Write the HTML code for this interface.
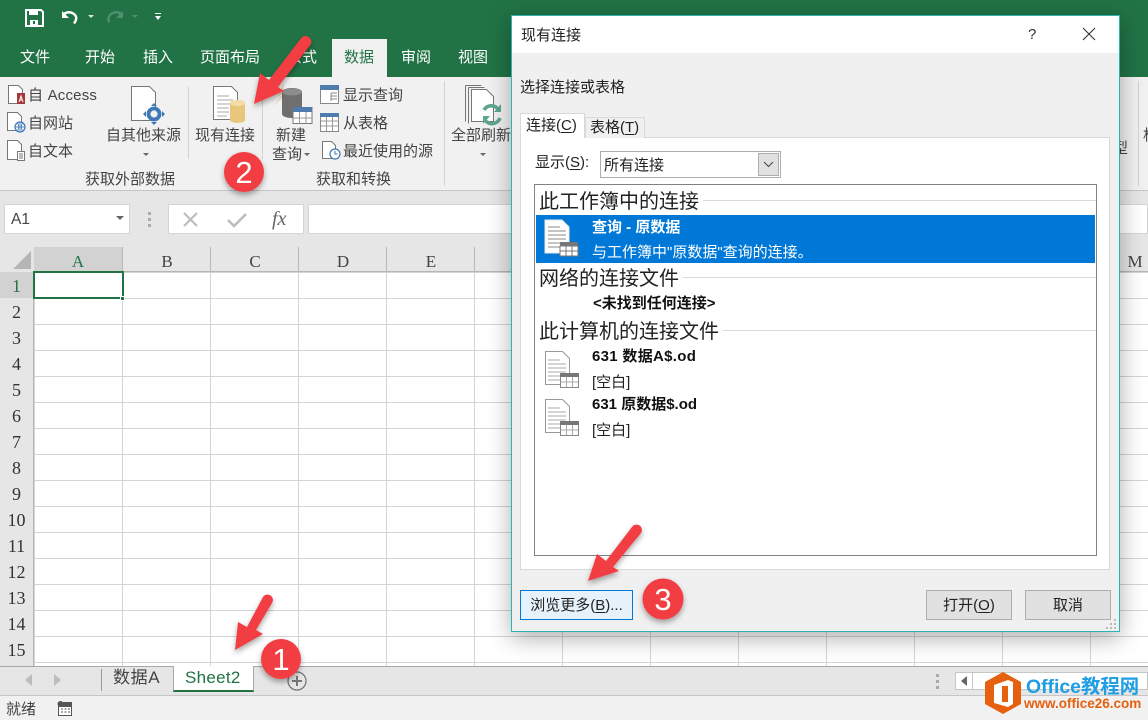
<!DOCTYPE html>
<html lang="zh"><head><meta charset="utf-8"><style>
html,body{margin:0;padding:0}
body{width:1148px;height:720px;overflow:hidden;position:relative;background:#fff;font-family:"Liberation Sans","Noto Sans CJK SC",sans-serif;color:#333}
.a{position:absolute}
.t{position:absolute;white-space:nowrap;line-height:20px;transform:translateY(-10px);font-size:15px}
.tab{color:#fff;font-size:15px;transform:translateY(-8px)}
.r{color:#444;font-size:15px;transform:translateY(-8px)}
.c{font-family:"Liberation Serif",serif;font-size:17px;color:#444;position:absolute;top:250px;width:88px;text-align:center;line-height:24px}
.n{font-family:"Liberation Serif",serif;font-size:18px;color:#333;position:absolute;left:0;width:33px;text-align:center;line-height:28px}
.h{position:absolute;left:539px;font-size:20px;color:#222;white-space:nowrap;line-height:24px;transform:translateY(-11px)}
.l{position:absolute;height:1px;background:#d9d9d9;right:52px}
.b{font-weight:bold;color:#111;font-size:15px}
.btn{position:absolute;top:590px;height:28px;background:#e1e1e1;border:1px solid #adadad;text-align:center;line-height:30px;font-size:15px;color:#222}
u{text-underline-offset:2px}
</style></head><body>

<!-- title bar -->
<div class="a" style="left:0;top:0;width:1148px;height:77px;background:#217346"></div>
<svg class="a" style="left:0;top:0" width="180" height="36" viewBox="0 0 180 36">
<path d="M26 10h15l2 2v14H26z" fill="none" stroke="#fff" stroke-width="2"/><path d="M29 10h9v5h-9z" fill="#fff"/><path d="M30 20h8v6h-8z" fill="#fff"/><path d="M33 21h2v3h-2z" fill="#217346"/>
<path d="M64 14a8 8 0 0 1 12 2.500q1 3-2 7" fill="none" stroke="#fff" stroke-width="2.400"/><path d="M62 11v7h7z" fill="#fff"/>
<path d="M88 15h6l-3 3z" fill="#d8e6dd"/>
<path d="M121 14a8 8 0 0 0-12 2.500q-1 2 0 6" fill="none" stroke="#4f9070" stroke-width="2.400"/><path d="M123 11v7h-7z" fill="#4f9070"/>
<path d="M132 15h6l-3 3z" fill="#4f9070"/>
<path d="M155 13h6v1h-6zM155 16h6l-3 4z" fill="#fff"/>
</svg>
<div class="t" style="left:723px;top:20px;color:#a8c9b6;font-size:14px">631.xlsx - Excel</div>
<div class="a" style="left:332px;top:39px;width:55px;height:38px;background:#f1f1f1"></div>
<div class="t tab" style="left:20px;top:56px">文件</div>
<div class="t tab" style="left:85px;top:56px">开始</div>
<div class="t tab" style="left:143px;top:56px">插入</div>
<div class="t tab" style="left:200px;top:56px">页面布局</div>
<div class="t tab" style="left:287px;top:56px">公式</div>
<div class="t tab" style="left:344px;top:56px;color:#217346">数据</div>
<div class="t tab" style="left:401px;top:56px">审阅</div>
<div class="t tab" style="left:458px;top:56px">视图</div>

<!-- ribbon -->
<div class="a" style="left:0;top:77px;width:1148px;height:113px;background:#f1f1f1"></div>
<div class="a" style="left:0;top:190px;width:1148px;height:1px;background:#c6c6c6"></div>
<div class="a" style="left:188px;top:87px;width:1px;height:72px;background:#d2d2d2"></div>
<div class="a" style="left:262px;top:87px;width:1px;height:72px;background:#d2d2d2"></div>
<div class="a" style="left:444px;top:81px;width:1px;height:105px;background:#d2d2d2"></div>
<div class="a" style="left:1138px;top:81px;width:1px;height:105px;background:#d2d2d2"></div>

<svg class="a" style="left:0;top:77px" width="520" height="100" viewBox="0 0 520 100">
<g fill="#fff" stroke="#777" stroke-width="1">
<path d="M8.500 8.500h10l4 4v14h-14z"/><path d="M7.500 35.500h10l4 4v14h-14z"/><path d="M7.500 63.500h10l4 4v15h-14z"/>
<path d="M131.500 9.500h18l6 6v28h-24z"/>
<path d="M213.500 9.500h18l6 6v27h-24z"/>
</g>
<path d="M17 16h8v11h-8z" fill="#a4373a"/><path d="M19 25l2-6 2 6M19.700 23h2.600" stroke="#fff" fill="none" stroke-width="1"/>
<circle cx="20" cy="50" r="5" fill="#eef3fa" stroke="#3f78b5" stroke-width="1.200"/><path d="M15 50h10M20 45v10M17.500 46q2.500 4 0 8M22.500 46q-2.500 4 0 8" stroke="#3f78b5" fill="none" stroke-width=".8"/>
<path d="M17.500 74.500h7v9h-7zM19 77h4M19 79h4M19 81h4" fill="#fff" stroke="#777"/>
<circle cx="154" cy="37" r="5.500" fill="#f1f1f1" stroke="#3f78b5" stroke-width="3.800"/><path d="M154 26l3 3h-6zM154 48l3-3h-6zM143 37l3-3v6zM165 37l-3-3v6z" fill="#3f78b5"/>
<path d="M217 19h12M217 23h16M217 27h16M217 31h12M217 35h12M217 39h10" stroke="#aaa"/>
<path d="M230 26a7.500 3 0 0 1 15 0v17a7.500 3 0 0 1-15 0z" fill="#e8c77d"/><ellipse cx="237.500" cy="26" rx="7.500" ry="3" fill="#f2dda9"/>
<path d="M284 6l-6 13 5-2-10 13 15-16-5 1z" fill="#e6cf9e"/>
<path d="M282 15a10 4 0 0 1 20 0v22a10 4 0 0 1-20 0z" fill="#6f6f6f"/><ellipse cx="292" cy="15" rx="10" ry="3.500" fill="#8d8d8d"/>
<path d="M293 30.500h19v16h-19z" fill="#fff" stroke="#777"/><path d="M293 30h19v5h-19z" fill="#4f7cac"/><path d="M293 41h19M299.500 35v12M306 35v12" stroke="#999"/>
<path d="M320.500 8.500h18v18h-18z" fill="#fff" stroke="#888"/><path d="M320 8h19v5h-19z" fill="#4f7cac"/><path d="M331 16h6M331 19h6M331 22h6M331 16v8" stroke="#888"/>
<path d="M320.500 36.500h18v18h-18z" fill="#fff" stroke="#888"/><path d="M320 36h19v4h-19z" fill="#4f7cac"/><path d="M321 44h17M321 49h17M326.500 40v14M332.500 40v14" stroke="#999"/>
<g fill="none" stroke="#777"><path d="M465.500 8.500h16M465.500 8.500v36M468.500 10.500h16M468.500 10.500v36"/></g>
<path d="M471.500 12.500h15l7 7v25h-22z" fill="#fff" stroke="#777"/>
<path d="M484 33a8.500 8.500 0 0 1 14-1M500 41a8.500 8.500 0 0 1-15 2" stroke="#5fa58e" stroke-width="3.600" fill="none"/><path d="M501 27v8h-7zM483 47v-8h7z" fill="#5fa58e"/>
<path d="M143 76h6l-3 3zM304 76h6l-3 3zM480 76h6l-3 3z" fill="#666"/>
</svg>
<svg class="a" style="left:320px;top:139px" width="22" height="22" viewBox="0 0 22 22"><path d="M2.500 2.500h9l4 4v13h-13z" fill="#fff" stroke="#777"/><circle cx="15" cy="15" r="5" fill="#fff" stroke="#3f78b5" stroke-width="1.200"/><path d="M15 12v3h2.500" fill="none" stroke="#3f78b5"/></svg>

<div class="t r" style="left:28px;top:94px;letter-spacing:.2px">自 Access</div>
<div class="t r" style="left:28px;top:122px">自网站</div>
<div class="t r" style="left:28px;top:150px">自文本</div>
<div class="t r" style="left:106px;top:134px">自其他来源</div>
<div class="t r" style="left:195px;top:134px">现有连接</div>
<div class="t r" style="left:276px;top:134px">新建</div>
<div class="t r" style="left:272px;top:153px">查询</div>
<div class="t r" style="left:343px;top:94px">显示查询</div>
<div class="t r" style="left:343px;top:122px">从表格</div>
<div class="t r" style="left:343px;top:150px">最近使用的源</div>
<div class="t r" style="left:451px;top:134px">全部刷新</div>
<div class="t r" style="left:85px;top:178px">获取外部数据</div>
<div class="t r" style="left:316px;top:178px">获取和转换</div>
<div class="t r" style="left:1113px;top:147px">型</div>
<div class="t r" style="left:1143px;top:134px">格</div>

<!-- formula bar -->
<div class="a" style="left:0;top:191px;width:1148px;height:56px;background:#e6e6e6"></div>
<div class="a" style="left:4px;top:204px;width:126px;height:30px;background:#fff;border:1px solid #d4d4d4;box-sizing:border-box"></div>
<div class="t" style="left:11px;top:220px;color:#444;font-size:15.500px">A1</div>
<svg class="a" style="left:115px;top:215px" width="10" height="8"><path d="M1 1h8l-4 4z" fill="#666"/></svg>
<div class="a" style="left:148px;top:212px;width:3px;height:3px;background:#aaa;box-shadow:0 6px #aaa,0 12px #aaa"></div>
<div class="a" style="left:168px;top:204px;width:136px;height:30px;background:#fff;border:1px solid #d4d4d4;box-sizing:border-box"></div>
<div class="a" style="left:308px;top:204px;width:840px;height:30px;background:#fff;border:1px solid #d4d4d4;box-sizing:border-box"></div>
<svg class="a" style="left:180px;top:208px" width="110" height="24" viewBox="0 0 110 24"><path d="M4 5l13 13M17 5L4 18" stroke="#bdbdbd" stroke-width="2.200"/><path d="M48 12l6 6 12-12" fill="none" stroke="#bdbdbd" stroke-width="2.600"/></svg>
<div class="t" style="left:272px;top:219px;font-family:'Liberation Serif',serif;font-style:italic;color:#666;font-size:20px">fx</div>

<!-- sheet -->
<div class="a" style="left:0;top:247px;width:1148px;height:25px;background:#e6e6e6;border-bottom:0"></div>
<div class="a" style="left:0;top:272px;width:34px;height:394px;background:#e6e6e6"></div>
<div class="a" style="left:34px;top:271px;width:1114px;height:1px;background:#b5b5b5"></div>
<div class="a" style="left:33px;top:272px;width:1px;height:394px;background:#b5b5b5"></div>
<div class="a" style="left:34px;top:272px;width:1114px;height:394px;background-color:#fff;background-image:linear-gradient(to right,transparent 87px,#d4d4d4 87px),linear-gradient(to bottom,transparent 25px,#d4d4d4 25px);background-size:88px 26px;background-position:1px 1px"></div>
<div class="a" style="left:34px;top:247px;width:88px;height:25px;background:#d2d2d2"></div>
<div class="a" style="left:0;top:272px;width:33px;height:26px;background:#d2d2d2"></div>
<svg class="a" style="left:12px;top:250px" width="20" height="20"><path d="M19 1v18H1z" fill="#b5b5b5"/></svg>
<svg class="a" style="left:0;top:247px" width="1148" height="25"><path d="M122.500 0v25M210.500 0v25M298.500 0v25M386.500 0v25M474.500 0v25M1090.500 0v25" stroke="#b8b8b8"/></svg>
<div class="c" style="left:34px;color:#217346">A</div><div class="c" style="left:123px">B</div><div class="c" style="left:211px">C</div><div class="c" style="left:299px">D</div><div class="c" style="left:387px">E</div><div class="c" style="left:1091px">M</div>
<div class="n" style="top:272px;color:#217346">1</div><div class="n" style="top:298px">2</div><div class="n" style="top:324px">3</div><div class="n" style="top:350px">4</div><div class="n" style="top:376px">5</div><div class="n" style="top:402px">6</div><div class="n" style="top:428px">7</div><div class="n" style="top:454px">8</div><div class="n" style="top:480px">9</div><div class="n" style="top:506px">10</div><div class="n" style="top:532px">11</div><div class="n" style="top:558px">12</div><div class="n" style="top:584px">13</div><div class="n" style="top:610px">14</div><div class="n" style="top:636px">15</div>
<div class="a" style="left:33px;top:271px;width:91px;height:28px;border:2px solid #217346;box-sizing:border-box"></div>
<div class="a" style="left:120px;top:296px;width:5px;height:5px;background:#217346;border:1px solid #fff;box-sizing:border-box"></div>

<!-- sheet tabs -->
<div class="a" style="left:0;top:666px;width:1148px;height:30px;background:#e6e6e6;border-top:1px solid #a8a8a8;box-sizing:border-box"></div>
<div class="a" style="left:0;top:695px;width:1148px;height:25px;background:#f1f1f1;border-top:1px solid #c6c6c6;box-sizing:border-box"></div>
<svg class="a" style="left:20px;top:672px" width="50" height="16"><path d="M12 2v12L5 8zM34 2v12l7-6z" fill="#bdbdbd"/></svg>
<div class="a" style="left:101px;top:669px;width:1px;height:22px;background:#9a9a9a"></div>
<div class="t" style="left:113px;top:678px;font-size:17px;color:#444;letter-spacing:.6px">数据A</div>
<div class="a" style="left:173px;top:666px;width:81px;height:26px;background:#fff;border:1px solid #a8a8a8;border-top:0;border-bottom:2px solid #217346;box-sizing:border-box"></div>
<div class="t" style="left:185px;top:678px;font-size:17px;color:#217346;letter-spacing:.3px">Sheet2</div>
<svg class="a" style="left:286px;top:670px" width="22" height="22"><circle cx="11" cy="11" r="9" fill="none" stroke="#777" stroke-width="1.300"/><path d="M11 6v10M6 11h10" stroke="#777" stroke-width="2"/></svg>
<div class="a" style="left:936px;top:674px;width:3px;height:3px;background:#aaa;box-shadow:0 6px #aaa,0 12px #aaa"></div>
<div class="a" style="left:955px;top:672px;width:193px;height:18px;background:#fff;border:1px solid #c6c6c6;box-sizing:border-box"></div>
<div class="a" style="left:972px;top:672px;width:1px;height:18px;background:#c6c6c6"></div>
<svg class="a" style="left:958px;top:675px" width="12" height="12"><path d="M9 1v10L3 6z" fill="#666"/></svg>
<div class="t" style="left:6px;top:710px;font-size:15px;color:#444">就绪</div>
<svg class="a" style="left:57px;top:701px" width="16" height="15"><circle cx="3.500" cy="3" r="3" fill="#555"/><path d="M6 1h9v4H6z" fill="#555"/><path d="M1.500 5.500h13v9h-13z" fill="#fff" stroke="#555"/><path d="M4 8h2M7.500 8h2M11 8h2M4 11h2M7.500 11h2M11 11h2" stroke="#555"/></svg>

<!-- dialog -->
<div class="a" style="left:511px;top:15px;width:609px;height:617px;background:#f0f0f0;border:1px solid #2fb3b0;box-sizing:border-box;box-shadow:0 6px 22px rgba(0,0,0,.32)"></div>
<div class="a" style="left:512px;top:16px;width:607px;height:37px;background:#fff"></div>
<div class="t" style="left:521px;top:36px;font-size:15px;color:#222">现有连接</div>
<div class="t" style="left:1028px;top:35px;font-size:15px;color:#333">?</div>
<svg class="a" style="left:1081px;top:26px" width="16" height="16"><path d="M2 2l12 12M14 2L2 14" stroke="#333" stroke-width="1.100"/></svg>
<div class="t" style="left:520px;top:88px;font-size:15px;color:#222">选择连接或表格</div>
<div class="a" style="left:520px;top:137px;width:590px;height:433px;background:#fff;border:1px solid #d9d9d9;box-sizing:border-box"></div>
<div class="a" style="left:585px;top:117px;width:60px;height:21px;background:#f0f0f0;border:1px solid #d9d9d9;border-bottom:0;box-sizing:border-box"></div>
<div class="a" style="left:520px;top:113px;width:65px;height:25px;background:#fff;border:1px solid #d9d9d9;border-bottom:0;box-sizing:border-box"></div>
<div class="t" style="left:526px;top:126px;font-size:15px;color:#222">连接(<u>C</u>)</div>
<div class="t" style="left:590px;top:128px;font-size:15px;color:#222">表格(<u>T</u>)</div>
<div class="t" style="left:535px;top:163px;font-size:15px;color:#222">显示(<u>S</u>):</div>
<div class="a" style="left:600px;top:151px;width:181px;height:27px;background:#fff;border:1px solid #adadad;box-sizing:border-box"></div>
<div class="t" style="left:604px;top:166px;font-size:15px;color:#222">所有连接</div>
<div class="a" style="left:758px;top:153px;width:21px;height:23px;background:#e1e1e1;border:1px solid #adadad;box-sizing:border-box"></div>
<svg class="a" style="left:763px;top:161px" width="11" height="8"><path d="M1 1l4.500 4.500L10 1" fill="none" stroke="#444"/></svg>

<div class="a" style="left:534px;top:184px;width:563px;height:372px;background:#fff;border:1px solid #828282;box-sizing:border-box"></div>
<div class="h" style="top:201px">此工作簿中的连接</div><div class="l" style="left:703px;top:200px"></div>
<div class="a" style="left:536px;top:215px;width:559px;height:48px;background:#0078d7"></div>
<svg class="a" style="left:540px;top:217px" width="42" height="44" viewBox="0 0 42 44"><path d="M5 3h17l7 7v26H5z" fill="#fff" stroke="#e8e8e8"/><path d="M8 10h12M8 14h18M8 18h18M8 22h18M8 26h18M8 30h12" stroke="#888"/><path d="M20 25h18v14H20z" fill="#fff"/><path d="M20 25h18v4H20z" fill="#777"/><path d="M20 34h18M26 29v10M32 29v10" stroke="#777"/><path d="M20 29h18v10H20z" fill="none" stroke="#777"/></svg>
<div class="t" style="left:592px;top:228px;font-size:15px;font-weight:bold;color:#fff">查询 - 原数据</div>
<div class="t" style="left:592px;top:253px;font-size:15px;color:#fff">与工作簿中"原数据"查询的连接。</div>
<div class="h" style="top:278px">网络的连接文件</div><div class="l" style="left:683px;top:277px"></div>
<div class="t b" style="left:593px;top:304px">&lt;未找到任何连接&gt;</div>
<div class="h" style="top:331px">此计算机的连接文件</div><div class="l" style="left:723px;top:330px"></div>
<svg class="a" style="left:540px;top:348px" width="42" height="92" viewBox="0 0 42 92"><g><path d="M5.500 3.500h17l7 7v26h-24z" fill="#fff" stroke="#999"/><path d="M8 12h12M8 16h18M8 20h18M8 24h18M8 28h18M8 32h12" stroke="#aaa"/><path d="M20.500 25.500h18v14h-18z" fill="#fff" stroke="#888"/><path d="M20 25h19v4H20z" fill="#777"/><path d="M21 34h17M26.500 29v10M32.500 29v10" stroke="#aaa"/></g><g transform="translate(0 48)"><path d="M5.500 3.500h17l7 7v26h-24z" fill="#fff" stroke="#999"/><path d="M8 12h12M8 16h18M8 20h18M8 24h18M8 28h18M8 32h12" stroke="#aaa"/><path d="M20.500 25.500h18v14h-18z" fill="#fff" stroke="#888"/><path d="M20 25h19v4H20z" fill="#777"/><path d="M21 34h17M26.500 29v10M32.500 29v10" stroke="#aaa"/></g></svg>
<div class="t b" style="left:592px;top:357px;letter-spacing:.3px">631 数据A$.od</div>
<div class="t" style="left:592px;top:383px;font-size:15px;color:#222">[空白]</div>
<div class="t b" style="left:592px;top:405px">631 原数据$.od</div>
<div class="t" style="left:592px;top:431px;font-size:15px;color:#222">[空白]</div>

<div class="btn" style="left:520px;width:111px;background:#e5f1fb;border-color:#0078d7">浏览更多(<u>B</u>)...</div>
<div class="btn" style="left:926px;width:84px">打开(<u>O</u>)</div>
<div class="btn" style="left:1025px;width:84px">取消</div>
<svg class="a" style="left:1105px;top:618px" width="13" height="13"><path d="M9 1h2v2H9zM5 5h2v2H5zM9 5h2v2H9zM1 9h2v2H1zM5 9h2v2H5zM9 9h2v2H9z" fill="#bbb"/></svg>

<!-- annotations -->
<svg class="a" style="left:0;top:0" width="1148" height="720" viewBox="0 0 1148 720">
<defs><filter id="s" x="-30%" y="-30%" width="160%" height="160%"><feDropShadow dx="0" dy="3" stdDeviation="3" flood-color="#000" flood-opacity=".35"/></filter></defs>
<g fill="#f23c42" filter="url(#s)">
<path d="M254 104L260 73L269 80L302 37A6 6 0 0 1 311 44L278 87L284 91Z"/>
<path d="M235 650L238 622L247 627L263 597A5 5 0 0 1 272 603L256 630L263 634Z"/>
<path d="M588 581L597 554L606 561L632 527A5 5 0 0 1 641 533L613 567L619 571Z"/>
<circle cx="244" cy="172" r="20"/><circle cx="281" cy="659" r="20"/><circle cx="663" cy="599" r="20.500"/>
</g>
<g fill="#fff" font-family="Liberation Sans,sans-serif" font-size="31" text-anchor="middle"><text x="244" y="183">2</text><text x="281" y="670">1</text><text x="663" y="610">3</text></g>
<path d="M1003 672l18 10v22l-18 10-18-10v-22z" fill="#e5600f"/>
<path d="M994 685l14-5v27l-14-4z" fill="#fff"/><path d="M1002 686h7v16h-7z" fill="#e5600f"/><path d="M1008 680l5 2v22l-5 3z" fill="#fff"/>
<text x="1026" y="693" font-family="Liberation Sans,Noto Sans CJK SC,sans-serif" font-size="19.400" font-weight="bold" fill="#1f9ee3">Office教程网</text>
<text x="1024" y="708" font-family="Liberation Sans,sans-serif" font-size="13.500" font-weight="bold" fill="#e5600f">www.office26.com</text>
</svg>
</body></html>
